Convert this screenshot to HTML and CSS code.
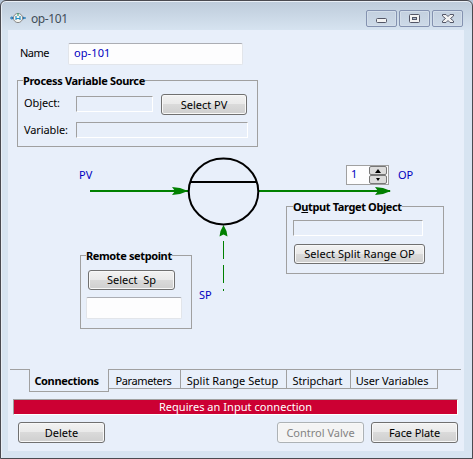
FILE: index.html
```
<!DOCTYPE html>
<html lang="en">
<head>
<meta charset="utf-8">
<title>op-101</title>
<link rel="stylesheet" href="styles.css">
</head>
<body>
<div class="window">
  <header class="titlebar">
    <svg class="app-icon" width="16" height="12" viewBox="0 0 16 12">
      <path d="M0 6h16" stroke="#2d86bd" stroke-width="1.2"/>
      <path d="M1.5 4l2.500 2-2.500 2zM12.500 4l2.500 2-2.500 2z" fill="#2675b5"/>
      <circle cx="8" cy="6" r="4.600" fill="#f4f4ef" stroke="#888"/>
      <path d="M6 4v4M10 4v4M6 6.500h4" stroke="#258fc5" stroke-width="1.200"/>
      <path d="M8 1v3" stroke="#42a079" stroke-width="1.200"/>
    </svg>
    <span class="title">op-101</span>
    <div class="controls">
      <span class="control"><svg width="29" height="15" viewBox="0 0 29 15"><rect x="9.5" y="7.5" width="10" height="4" rx="1" fill="#f3f3f3" stroke="#535666"/></svg></span>
      <span class="control"><svg width="29" height="15" viewBox="0 0 29 15"><rect x="9.5" y="3.5" width="10" height="8" rx="1" fill="#f3f3f3" stroke="#535666"/><rect x="12.5" y="6.5" width="4" height="2" fill="#a9b9cd" stroke="#535666"/></svg></span>
      <span class="control"><svg width="29" height="15" viewBox="0 0 29 15"><path d="M9.500 3.500h3.500l2 2 2-2h3.500v1.500l-3 2.500 3 2.500v1.500h-3.500l-2-2-2 2h-3.500v-1.500l3-2.500-3-2.500z" fill="#f3f3f3" stroke="#535666"/></svg></span>
    </div>
  </header>
  <main class="pane">
    <div class="name-row"><span class="name-label">Name</span><div class="input name-input">op-101</div></div>
    <section class="group source">
      <h2 class="legend source-legend">Process Variable Source</h2>
      <div class="row"><span class="label">Object:</span><div class="field object-field"></div><button class="button select-pv"><span>Select PV</span></button></div>
      <div class="row"><span class="label">Variable:</span><div class="field variable-field"></div></div>
    </section>
    <section class="diagram">
      <svg class="wires" width="456" height="221" viewBox="8 147 456 221">
        <path d="M90 191h98M259 191h131" stroke="#008000" stroke-width="2"/>
        <path d="M172 187l8 1 8 3-8 3-8 1 3-4zM375 187l8 1 8 3-8 3-8 1 3-4z" fill="#008000"/>
        <path d="M223.500 225l3 6 1 5.500-4-2-4 2 1-5.500z" fill="#008000"/>
        <path d="M223.500 241v18M223.500 265v18M223.500 289v2" stroke="#008000" stroke-width="1"/>
        <ellipse cx="223.500" cy="191.500" rx="34.800" ry="33" fill="none" stroke="#000" stroke-width="2"/>
        <path d="M190 182h67" stroke="#000" stroke-width="2"/>
      </svg>
      <span class="port pv">PV</span>
      <span class="port op">OP</span>
      <span class="port sp">SP</span>
      <div class="spinner"><span class="spin-value">1</span><div class="spin-buttons">
        <span class="spin"><svg width="6" height="4" viewBox="0 0 6 4"><path d="M0 4l3-4 3 4z"/></svg></span>
        <span class="spin"><svg width="4" height="3" viewBox="0 0 4 3"><path d="M0 0h4l-2 3z"/></svg></span>
      </div></div>
      <section class="group target">
        <h2 class="legend">O<u>u</u>tput Target Object</h2>
        <div class="field target-field"></div>
        <button class="button select-op"><span>Select Split Range OP</span></button>
      </section>
      <section class="group remote">
        <h2 class="legend">Remote setpoint</h2>
        <button class="button select-sp"><span>Select&nbsp; Sp</span></button>
        <div class="input remote-input"></div>
      </section>
    </section>
    <nav class="tabs">
      <span class="tab active"><span>Connections</span></span>
      <span class="tab parameters"><span>Parameters</span></span>
      <span class="tab split"><span>Split Range Setup</span></span>
      <span class="tab strip"><span>Stripchart</span></span>
      <span class="tab user"><span>User Variables</span></span>
      <span class="tab-rest"></span>
    </nav>
    <div class="status"><span>Requires an Input connection</span></div>
    <footer class="actions">
      <button class="button delete"><span>Delete</span></button>
      <button class="button control-valve" disabled><span>Control Valve</span></button>
      <button class="button face-plate"><span>Face Plate</span></button>
    </footer>
  </main>
</div>
</body>
</html>
```
FILE: styles.css
```
* { box-sizing: border-box; }
body {
  margin: 0;
  width: 473px;
  height: 459px;
  overflow: hidden;
  background: #b4c4d6;
  font: 11px/14px "Noto Sans", "Open Sans", sans-serif;
  color: #000;
  white-space: nowrap;
}
.window {
  width: 473px;
  height: 459px;
  border: 1px solid #4a4a50;
  border-radius: 6px 6px 0 0;
  padding: 0 7px;
  background: linear-gradient(#bdcbda, #d7e4f1 30px, #d7e4f1);
  box-shadow: inset 0 1px #e9eff6, inset 1px 0 #e9eff6;
}
.titlebar { display: flex; height: 29px; }
.app-icon { margin: 11px 5px 0 2px; }
.title { margin-top: 11px; font-size: 12px; letter-spacing: -0.4px; color: #424d58; }
.controls { display: flex; gap: 2px; margin: 9px 2px 0 auto; }
.control {
  width: 31px;
  height: 17px;
  border: 1px solid #8492b0;
  border-radius: 2px;
  background: linear-gradient(#c3d0df, #cddae8);
  box-shadow: inset 0 0 0 1px #d3deea;
}
.control svg { display: block; }
.pane { width: 456px; height: 421px; background: #e8effa; padding-top: 13px; }
.name-row { display: flex; height: 22px; margin-left: 12px; }
.name-label { width: 48px; padding-top: 3px; letter-spacing: -0.5px; }
.input {
  height: 22px;
  border: 1px solid #e2e5ea;
  border-top-color: #abadb3;
  border-radius: 2px;
  background: #fdfdfe;
}
.name-input { width: 175px; padding: 2px 5px; color: #0000c0; letter-spacing: 0.1px; }
.group { border: 1px solid #a0a0a0; }
.legend {
  width: max-content;
  margin: -7px 0 0;
  background: #e8effa;
  font: bold 11px/14px "Noto Sans", "Open Sans", sans-serif;
  letter-spacing: -0.38px;
}
.source-legend { letter-spacing: -0.33px; }
.source { width: 241px; height: 67px; margin: 15px 0 0 9px; padding-left: 5px; }
.row { display: flex; }
.label { width: 53px; padding: 8px 0 0 1px; letter-spacing: -0.1px; }
.field {
  height: 16px;
  border: 1px solid #a0a0a0;
  border-right-color: #fff;
  border-bottom-color: #fff;
}
.object-field { width: 77px; margin-top: 8px; }
.variable-field { width: 172px; margin-top: 7px; }
.button {
  display: block;
  height: 21px;
  padding: 0;
  border: 1px solid #707070;
  border-radius: 3px;
  background: linear-gradient(#f2f2f2, #e9e9e9 49%, #dadada 50%, #cfcfcf);
  box-shadow: inset 0 0 0 1px #f8f8f8;
  color: #000;
  font: 11px/14px "Noto Sans", "Open Sans", sans-serif;
}
.select-pv { width: 86px; margin: 6px 0 0 8px; }
.diagram { position: relative; height: 222px; }
.wires { display: block; }
.port { position: absolute; color: #0000c0; }
.pv { left: 71px; top: 21px; }
.op { left: 390px; top: 21px; }
.sp { left: 191px; top: 141px; }
.spinner {
  position: absolute;
  left: 338px;
  top: 18px;
  display: flex;
  width: 43px;
  height: 20px;
  border: 1px solid #a0a0a0;
  background: #fdfdfe;
}
.spin-value { width: 22px; padding: 1px 0 0 4px; color: #0000c0; }
.spin-buttons { display: flex; flex-direction: column; width: 18px; }
.spin {
  display: flex;
  align-items: center;
  justify-content: center;
  height: 9px;
  border: 1px solid #777;
  border-radius: 2px;
  background: #dcdcdc;
}
.target { position: absolute; left: 278px; top: 59px; width: 158px; height: 68px; padding-left: 6px; }
.target-field { width: 130px; margin-top: 6px; }
.select-op { width: 131px; height: 20px; margin: 8px 0 0 1px; letter-spacing: 0.05px; }
.remote { position: absolute; left: 72px; top: 108px; width: 112px; height: 74px; padding-left: 5px; }
.select-sp { width: 87px; height: 20px; margin: 7px 0 0 2px; }
.remote-input { width: 96px; margin-top: 7px; }
.tabs { display: flex; height: 23px; margin: 0 3px 0 2px; }
.tabs::before { content: ""; width: 19px; border-top: 1px solid #a0a0a0; }
.tab {
  height: 20px;
  padding: 4px 2px 0 0;
  border: solid #a0a0a0;
  border-width: 1px 1px 1px 0;
  text-align: center;
  letter-spacing: -0.1px;
}
.active {
  width: 80px;
  height: 23px;
  padding: 5px 5px 0 0;
  border-width: 0 1px 1px;
  font-weight: bold;
  letter-spacing: -0.35px;
}
.parameters { width: 72px; letter-spacing: -0.4px; }
.split { width: 106px; letter-spacing: 0.05px; }
.strip { width: 64px; }
.user { width: 87px; padding-right: 4px; }
.tab-rest { flex: 1; border-top: 1px solid #a0a0a0; }
.status {
  width: 445px;
  height: 16px;
  margin: 7px 0 0 5px;
  border: 1px solid #a0a0a0;
  border-right-color: #fff;
  border-bottom-color: #fff;
  background: #cc0033;
  color: #fff;
  text-align: center;
  letter-spacing: 0.04px;
}
.actions { display: flex; margin: 7px 6px 0 10px; }
.delete, .control-valve, .face-plate { width: 87px; }
.face-plate { letter-spacing: -0.1px; }
.control-valve {
  margin: 0 7px 0 auto;
  border-color: #adb2b5;
  background: #f4f4f4;
  color: #838383;
}
```
